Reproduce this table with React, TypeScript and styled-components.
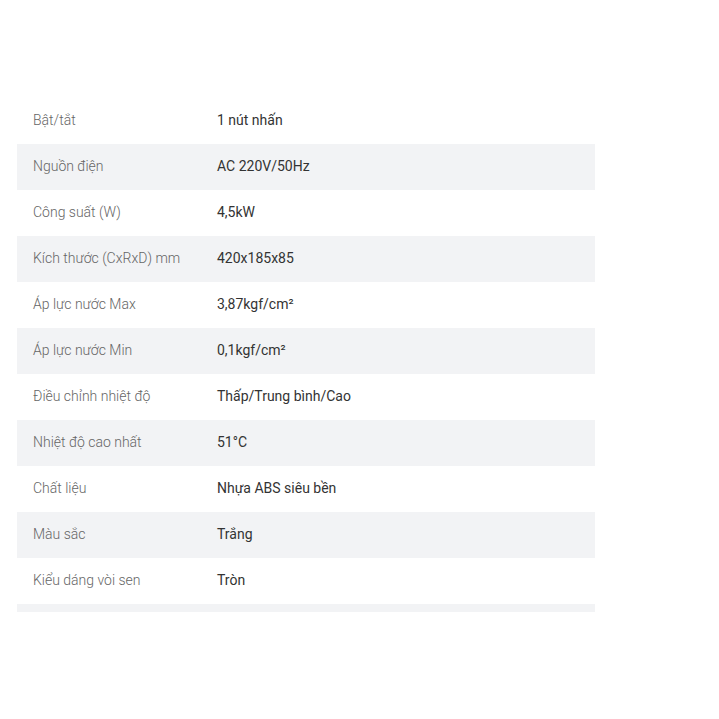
import { createGlobalStyle } from "styled-components";
import styled from "styled-components";

const GlobalStyle = createGlobalStyle`
  html, body {
    margin: 0;
    padding: 0;
    background: #ffffff;
  }
  body {
    font-family: Roboto, "Noto Sans", sans-serif;
  }
`;

const Page = styled.div`
  padding: 98px 0 0 17px;
`;

const SpecTable = styled.div`
  display: flex;
  flex-direction: column;
  width: 578px;
`;

const SpecRow = styled.div<{ $shaded: boolean }>`
  display: grid;
  grid-template-columns: 200px 1fr;
  align-items: center;
  height: 46px;
  padding-bottom: 2px;
  box-sizing: border-box;
  background: ${({ $shaded }) => ($shaded ? "#f2f3f5" : "transparent")};
`;

const TailRow = styled.div`
  height: 8px;
  background: #f2f3f5;
`;

const Label = styled.span`
  padding-left: 16px;
  font-size: 14px;
  font-weight: 300;
  color: #666666;
`;

const Value = styled.span`
  font-size: 14px;
  color: #333333;
`;

const specs: [string, string][] = [
  ["Bật/tắt", "1 nút nhấn"],
  ["Nguồn điện", "AC 220V/50Hz"],
  ["Công suất (W)", "4,5kW"],
  ["Kích thước (CxRxD) mm", "420x185x85"],
  ["Áp lực nước Max", "3,87kgf/cm²"],
  ["Áp lực nước Min", "0,1kgf/cm²"],
  ["Điều chỉnh nhiệt độ", "Thấp/Trung bình/Cao"],
  ["Nhiệt độ cao nhất", "51°C"],
  ["Chất liệu", "Nhựa ABS siêu bền"],
  ["Màu sắc", "Trắng"],
  ["Kiểu dáng vòi sen", "Tròn"],
];

export default function App() {
  return (
    <>
      <GlobalStyle />
      <Page>
        <SpecTable>
          {specs.map(([label, value], i) => (
            <SpecRow key={label} $shaded={i % 2 === 1}>
              <Label>{label}</Label>
              <Value>{value}</Value>
            </SpecRow>
          ))}
          <TailRow />
        </SpecTable>
      </Page>
    </>
  );
}
